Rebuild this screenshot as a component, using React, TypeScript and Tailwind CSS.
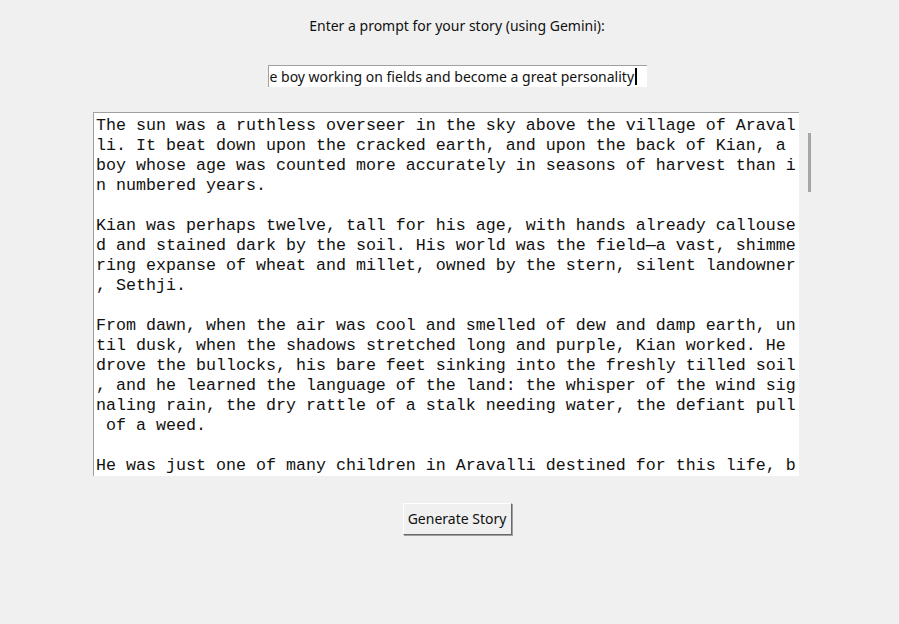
import React from "react";

const lines = [
  "The sun was a ruthless overseer in the sky above the village of Araval",
  "li. It beat down upon the cracked earth, and upon the back of Kian, a ",
  "boy whose age was counted more accurately in seasons of harvest than i",
  "n numbered years.",
  "",
  "Kian was perhaps twelve, tall for his age, with hands already callouse",
  "d and stained dark by the soil. His world was the field\u2014a vast, shimme",
  "ring expanse of wheat and millet, owned by the stern, silent landowner",
  ", Sethji.",
  "",
  "From dawn, when the air was cool and smelled of dew and damp earth, un",
  "til dusk, when the shadows stretched long and purple, Kian worked. He ",
  "drove the bullocks, his bare feet sinking into the freshly tilled soil",
  ", and he learned the language of the land: the whisper of the wind sig",
  "naling rain, the dry rattle of a stalk needing water, the defiant pull",
  " of a weed.",
  "",
  "He was just one of many children in Aravalli destined for this life, b",
];

export default function App() {
  const ui = { fontFamily: '"Noto Sans", "Open Sans", sans-serif' };
  return (
    <div className="w-[899px] h-[624px] overflow-hidden bg-[#f0f0f0]">
      <div className="w-[914px] flex flex-col items-center" style={ui}>
        <div className="mt-[16px] h-[20px] text-[14px] leading-[20px] text-[#111]">
          Enter a prompt for your story (using Gemini):
        </div>
        <div className="mt-[29px] w-[379px] h-[22px] bg-white border-t border-l border-[#a0a0a0] flex items-center pl-[1px] overflow-hidden">
          <span className="text-[14px] leading-[20px] text-[#111] whitespace-pre">
            e boy working on fields and become a great personality
          </span>
          <span className="ml-[1px] w-[2px] h-[17px] bg-black" />
        </div>
        <div className="mt-[25px] flex w-[728px] h-[364px]">
          <div className="w-[706px] h-[364px] bg-white border-t border-l border-[#a0a0a0] pt-[3px] pl-[2px] overflow-hidden">
            <div
              className="text-[16.667px] leading-[20px] text-[#111]"
              style={{ fontFamily: '"Liberation Mono", "Courier New", monospace' }}
            >
              {lines.map((l, i) => (
                <div key={i} className="h-[20px] whitespace-pre">
                  {l}
                </div>
              ))}
            </div>
          </div>
          <div className="w-[22px] h-[364px] pl-[9px] pt-[21px]">
            <div className="w-[3px] h-[59px] bg-[#a6a6a6]" />
          </div>
        </div>
        <button
          className="mt-[27px] w-[109px] h-[32px] bg-[#f0f0f0] border border-t-white border-l-white border-b-[#696969] border-r-[#696969] text-[14px] leading-[20px] text-[#111] shadow-[1px_1px_0_#a0a0a0]"
          style={ui}
        >
          Generate Story
        </button>
      </div>
    </div>
  );
}
